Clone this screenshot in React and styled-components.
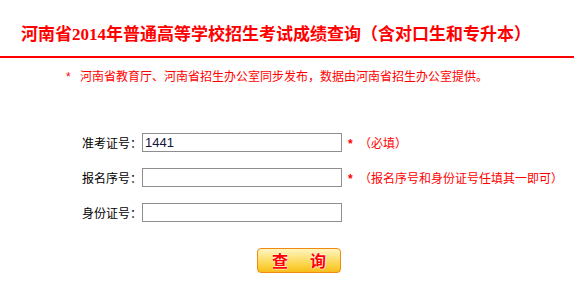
import React from "react";
import styled, { createGlobalStyle } from "styled-components";

const Global = createGlobalStyle`
  html, body { margin: 0; padding: 0; background: #fff; }
  body { font-family: "Liberation Sans", "Noto Sans CJK SC", sans-serif; font-size: 12px; }
`;

const Page = styled.div`
  width: 574px;
  height: 292px;
  overflow: hidden;
  background: #fff;
`;

const Header = styled.div`
  padding: 25px 0 11px 21px;
  border-bottom: 2px solid #ff0000;
`;

const Title = styled.h1`
  margin: 0;
  font-family: "Liberation Serif", "Noto Sans CJK SC", serif;
  font-size: 17px;
  line-height: 20px;
  font-weight: bold;
  color: #ff0000;
  white-space: nowrap;
`;

const Notice = styled.p`
  margin: 10px 0 0 66px;
  font-family: "Liberation Sans", "Noto Sans CJK SC", sans-serif;
  font-size: 12px;
  line-height: 18px;
  color: #ff0000;
  white-space: nowrap;
`;

const NoticeStar = styled.span`
  display: inline-block;
  width: 14px;
`;

const Form = styled.form`
  margin-top: 47px;
  display: flex;
  flex-direction: column;
  gap: 16px;
  padding-left: 82px;
`;

const Row = styled.div`
  display: flex;
  align-items: center;
  height: 19px;
`;

const Label = styled.label`
  width: 60px;
  font-family: "Liberation Sans", "Noto Sans CJK SC", sans-serif;
  font-size: 12px;
  color: #000;
  white-space: nowrap;
`;

const Input = styled.input`
  box-sizing: border-box;
  width: 200px;
  height: 19px;
  margin: 0;
  padding: 0 2px;
  border: 1px solid #8e8e8e;
  font-family: "Liberation Sans", sans-serif;
  font-size: 13px;
  color: #14143c;
  outline: none;
`;

const Hint = styled.span`
  margin-left: 6px;
  color: #ff0000;
  font-family: "Liberation Sans", "Noto Sans CJK SC", sans-serif;
  font-size: 12px;
  white-space: nowrap;
`;

const Star = styled.span`
  font-weight: bold;
  margin-right: 3px;
`;

const ButtonRow = styled.div`
  margin-top: 26px;
  padding-left: 257px;
`;

const QueryButton = styled.button`
  box-sizing: border-box;
  width: 84px;
  height: 25px;
  margin: 0;
  padding: 0;
  border: 1px solid #f08a10;
  border-radius: 4px;
  background: linear-gradient(to bottom, #fff6c0 0%, #fde27a 40%, #fbcf3a 75%, #f8bd1c 100%);
  color: #ff0000;
  font-family: "Noto Sans CJK SC", sans-serif;
  font-size: 16px;
  font-weight: bold;
  line-height: 23px;
  text-shadow: 0 0 1px #fff, 0 0 1px #fff, 0 0 2px #fff;
  display: flex;
  align-items: center;
  justify-content: center;
  gap: 22px;
  cursor: pointer;
`;

export default function App() {
  return (
    <Page>
      <Global />
      <Header>
        <Title>河南省2014年普通高等学校招生考试成绩查询（含对口生和专升本）</Title>
      </Header>
      <Notice>
        <NoticeStar>*</NoticeStar>河南省教育厅、河南省招生办公室同步发布，数据由河南省招生办公室提供。
      </Notice>
      <Form onSubmit={(e) => e.preventDefault()}>
        <Row>
          <Label>准考证号：</Label>
          <Input defaultValue="1441" />
          <Hint><Star>*</Star> （必填）</Hint>
        </Row>
        <Row>
          <Label>报名序号：</Label>
          <Input />
          <Hint><Star>*</Star> （报名序号和身份证号任填其一即可）</Hint>
        </Row>
        <Row>
          <Label>身份证号：</Label>
          <Input />
        </Row>
      </Form>
      <ButtonRow>
        <QueryButton type="button"><span>查</span><span>询</span></QueryButton>
      </ButtonRow>
    </Page>
  );
}
